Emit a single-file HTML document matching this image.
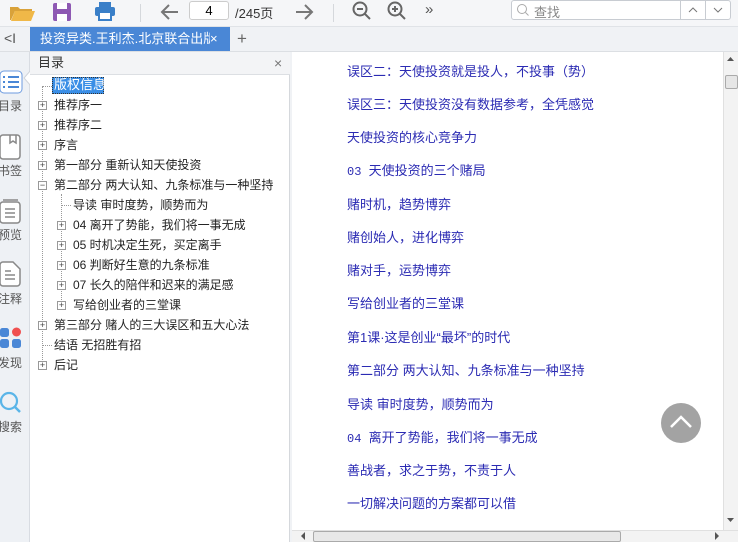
<!DOCTYPE html>
<html><head><meta charset="utf-8"><style>
*{margin:0;padding:0;box-sizing:border-box}
body{width:738px;height:542px;overflow:hidden;background:#f0f2f5;font-family:"Liberation Sans","Noto Sans CJK SC",sans-serif;position:relative}
.abs{position:absolute}
.tb{left:0;top:0;width:738px;height:27px;background:#f5f6f8;border-bottom:1px solid #e0e3e7}
.tabs{left:0;top:27px;width:738px;height:25px;background:#f0f2f5;border-bottom:1px solid #dcdfe3}
.tab{left:30px;top:27px;width:200px;height:24px;background:#4a87d6;color:#fff;font-size:13px;line-height:24px;padding-left:10px;white-space:nowrap;overflow:hidden}
.rail{left:0;top:52px;width:30px;height:490px;background:#eef1f5;border-right:1px solid #d8dce2}
.rl{font-size:12px;color:#555;left:-2px;width:32px;text-align:left;white-space:nowrap}
.toc{left:30px;top:52px;width:260px;height:490px;background:#fff;border-right:1px solid #d5d8dc}
.toch{left:30px;top:52px;width:260px;height:23px;background:#f3f4f6;border-bottom:1px solid #dcdfe3;font-size:13px;line-height:22px;padding-left:8px;color:#333}
.ti{font-size:12px;color:#222;white-space:nowrap;line-height:16px}
.pb{width:9px;height:9px;border:1px solid #999;background:#fff;font-size:9px;line-height:7px;text-align:center;color:#444}
.content{left:292px;top:52px;width:432px;height:478px;background:#fff}
.cl{left:347px;font-size:13px;color:#2b2bb3;white-space:nowrap}
.vs{left:723px;top:52px;width:15px;height:478px;background:#f3f3f3;border-left:1px solid #e0e0e0}
.hs{left:292px;top:530px;width:446px;height:12px;background:#f3f3f3;border-top:1px solid #e0e0e0}
</style></head><body>
<div class="abs tb"></div>
<svg class="abs" style="left:8px;top:2px" width="28" height="20"><path d="M2 5h8l2 2h12v2H7L3 18H2z" fill="#d9a23a"/><path d="M7 9h20l-4 10H3z" fill="#f0b848"/></svg>
<svg class="abs" style="left:52px;top:2px" width="20" height="20"><rect x="1" y="1" width="18" height="18" rx="2" fill="#8e59b3"/><rect x="5" y="1" width="10" height="6" fill="#fff"/><rect x="5" y="12" width="10" height="7" fill="#fff"/></svg>
<svg class="abs" style="left:94px;top:1px" width="22" height="20"><rect x="5" y="1" width="12" height="5" fill="#3a7fc8"/><rect x="1" y="6" width="20" height="9" rx="2" fill="#3a7fc8"/><rect x="5" y="11" width="12" height="8" fill="#fff" stroke="#3a7fc8" stroke-width="2"/></svg>
<div class="abs" style="left:140px;top:4px;width:1px;height:18px;background:#d5d8dc"></div>
<svg class="abs" style="left:160px;top:3px" width="20" height="18"><path d="M18 9H3M9 2L2 9l7 7" stroke="#777" stroke-width="2" fill="none"/></svg>
<div class="abs" style="left:189px;top:1px;width:40px;height:19px;background:#fff;border:1px solid #ccc;border-radius:3px;font-size:13px;text-align:center;line-height:17px">4</div>
<div class="abs" style="left:235px;top:3px;font-size:13px;color:#333">/245页</div>
<svg class="abs" style="left:294px;top:3px" width="20" height="18"><path d="M2 9h15M11 2l7 7-7 7" stroke="#777" stroke-width="2" fill="none"/></svg>
<div class="abs" style="left:333px;top:4px;width:1px;height:18px;background:#d5d8dc"></div>
<svg class="abs" style="left:352px;top:1px" width="20" height="20"><circle cx="8" cy="8" r="6.5" stroke="#666" stroke-width="2" fill="none"/><path d="M13 13l5 5M5 8h6" stroke="#666" stroke-width="2"/></svg>
<svg class="abs" style="left:387px;top:1px" width="20" height="20"><circle cx="8" cy="8" r="6.5" stroke="#666" stroke-width="2" fill="none"/><path d="M13 13l5 5M5 8h6M8 5v6" stroke="#666" stroke-width="2"/></svg>
<div class="abs" style="left:425px;top:1px;font-size:15px;color:#555">»</div>
<div class="abs" style="left:511px;top:0;width:220px;height:20px;background:#fff;border:1px solid #c8ccd2;border-radius:3px"></div>
<svg class="abs" style="left:516px;top:3px" width="14" height="14"><circle cx="6" cy="6" r="4.5" stroke="#aaa" fill="none"/><path d="M9.5 9.5l3 3" stroke="#aaa"/></svg>
<div class="abs" style="left:534px;top:2px;font-size:13px;color:#888">查找</div>
<div class="abs" style="left:680px;top:0;width:1px;height:20px;background:#c8ccd2"></div>
<div class="abs" style="left:705px;top:0;width:1px;height:20px;background:#c8ccd2"></div>
<svg class="abs" style="left:687px;top:6px" width="12" height="8"><path d="M2 6l4-4 4 4" stroke="#777" fill="none"/></svg>
<svg class="abs" style="left:712px;top:6px" width="12" height="8"><path d="M2 2l4 4 4-4" stroke="#777" fill="none"/></svg>

<div class="abs tabs"></div>
<div class="abs" style="left:4px;top:30px;font-size:14px;color:#555">&lt;I</div>
<div class="abs tab">投资异类.王利杰.北京联合出版公</div>
<div class="abs" style="left:210px;top:27px;width:20px;height:24px;background:#4a87d6;color:#fff;font-size:13px;line-height:24px">×</div>
<div class="abs" style="left:237px;top:29px;font-size:17px;color:#666">+</div>

<div class="abs rail"></div>
<svg class="abs" style="left:-1px;top:70px" width="24" height="24"><rect x="1" y="1" width="22" height="22" rx="4" fill="#fff" stroke="#6d9be0"/><path d="M4 7h2M9 7h11M4 12h2M9 12h11M4 17h2M9 17h11" stroke="#4a87d6" stroke-width="2"/></svg>
<div class="abs rl" style="top:97px">目录</div>
<svg class="abs" style="left:-1px;top:134px" width="24" height="26"><rect x="1" y="1" width="20" height="24" rx="3" fill="#fff" stroke="#888" stroke-width="1.5"/><path d="M11 1v8l3-2 3 2V1" fill="none" stroke="#888" stroke-width="1.5"/></svg>
<div class="abs rl" style="top:162px">书签</div>
<svg class="abs" style="left:-1px;top:198px" width="24" height="26"><rect x="1" y="4" width="20" height="21" rx="3" fill="#fff" stroke="#888" stroke-width="1.5"/><path d="M4 2h15M6 11h10M6 15h10M6 19h10" stroke="#888" stroke-width="1.5"/></svg>
<div class="abs rl" style="top:226px">预览</div>
<svg class="abs" style="left:-1px;top:261px" width="24" height="26"><path d="M1 4a3 3 0 0 1 3-3h10l7 7v14a3 3 0 0 1-3 3H4a3 3 0 0 1-3-3z" fill="#fff" stroke="#888" stroke-width="1.5"/><path d="M6 10h6M6 14h10M6 18h10" stroke="#888" stroke-width="1.5"/></svg>
<div class="abs rl" style="top:290px">注释</div>
<svg class="abs" style="left:0;top:326px" width="24" height="26"><rect x="0" y="2" width="9" height="9" rx="2.5" fill="#4a87d6"/><circle cx="16.5" cy="6" r="4.5" fill="#f05050"/><rect x="0" y="13" width="9" height="9" rx="2.5" fill="#4a87d6"/><rect x="12" y="13" width="9" height="9" rx="2.5" fill="#4a87d6"/></svg>
<div class="abs rl" style="top:354px">发现</div>
<svg class="abs" style="left:-1px;top:390px" width="24" height="26"><circle cx="10" cy="11" r="8" stroke="#5ab5e8" stroke-width="2.2" fill="none"/><path d="M16 17l5 5" stroke="#5ab5e8" stroke-width="2.5"/></svg>
<div class="abs rl" style="top:418px">搜索</div>
<svg class="abs" style="left:23px;top:70px" width="8" height="16"><path d="M8 0L1 8l7 8" fill="#fff" stroke="#d0d4da"/></svg>

<div class="abs toc"></div>
<div class="abs toch">目录</div>
<div class="abs" style="left:274px;top:55px;font-size:14px;color:#777">×</div>
<div class="abs" style="left:42px;top:86px;height:280px;border-left:1px dotted #999"></div>
<div class="abs" style="left:42px;top:86px;width:10px;border-top:1px dotted #999"></div>
<div class="abs" style="left:61px;top:194px;height:112px;border-left:1px dotted #999"></div>
<div class="abs" style="left:61px;top:205px;width:10px;border-top:1px dotted #999"></div>
<div class="abs" style="left:42px;top:345px;width:10px;border-top:1px dotted #999"></div>
<div class="abs" style="left:52px;top:77px;width:52px;height:17px;background:#3a8ee6;border:1px dotted #333"></div>
<div class="abs ti" style="left:54px;top:77px;color:#fff;font-size:13px">版权信息</div>
<div class="abs ti" style="left:54px;top:97px">推荐序一</div>
<div class="abs ti" style="left:54px;top:117px">推荐序二</div>
<div class="abs ti" style="left:54px;top:137px">序言</div>
<div class="abs ti" style="left:54px;top:157px">第一部分 重新认知天使投资</div>
<div class="abs ti" style="left:54px;top:177px">第二部分 两大认知、九条标准与一种坚持</div>
<div class="abs ti" style="left:73px;top:197px">导读 审时度势，顺势而为</div>
<div class="abs ti" style="left:73px;top:217px">04 离开了势能，我们将一事无成</div>
<div class="abs ti" style="left:73px;top:237px">05 时机决定生死，买定离手</div>
<div class="abs ti" style="left:73px;top:257px">06 判断好生意的九条标准</div>
<div class="abs ti" style="left:73px;top:277px">07 长久的陪伴和迟来的满足感</div>
<div class="abs ti" style="left:73px;top:297px">写给创业者的三堂课</div>
<div class="abs ti" style="left:54px;top:317px">第三部分 赌人的三大误区和五大心法</div>
<div class="abs ti" style="left:54px;top:337px">结语 无招胜有招</div>
<div class="abs ti" style="left:54px;top:357px">后记</div>
<div class="abs pb" style="left:38px;top:101px">+</div>
<div class="abs pb" style="left:38px;top:121px">+</div>
<div class="abs pb" style="left:38px;top:141px">+</div>
<div class="abs pb" style="left:38px;top:161px">+</div>
<div class="abs pb" style="left:38px;top:181px">−</div>
<div class="abs pb" style="left:57px;top:221px">+</div>
<div class="abs pb" style="left:57px;top:241px">+</div>
<div class="abs pb" style="left:57px;top:261px">+</div>
<div class="abs pb" style="left:57px;top:281px">+</div>
<div class="abs pb" style="left:57px;top:301px">+</div>
<div class="abs pb" style="left:38px;top:321px">+</div>
<div class="abs pb" style="left:38px;top:361px">+</div>

<div class="abs content"></div>
<div class="abs cl" style="top:61px">误区二：天使投资就是投人，不投事（势）</div>
<div class="abs cl" style="top:94px">误区三：天使投资没有数据参考，全凭感觉</div>
<div class="abs cl" style="top:127px">天使投资的核心竞争力</div>
<div class="abs cl" style="top:160px"><span style="font-family:'Liberation Mono',monospace;font-size:12px">03 </span>天使投资的三个赌局</div>
<div class="abs cl" style="top:194px">赌时机，趋势博弈</div>
<div class="abs cl" style="top:227px">赌创始人，进化博弈</div>
<div class="abs cl" style="top:260px">赌对手，运势博弈</div>
<div class="abs cl" style="top:293px">写给创业者的三堂课</div>
<div class="abs cl" style="top:327px">第1课·这是创业“最坏”的时代</div>
<div class="abs cl" style="top:360px">第二部分 两大认知、九条标准与一种坚持</div>
<div class="abs cl" style="top:394px">导读 审时度势，顺势而为</div>
<div class="abs cl" style="top:427px"><span style="font-family:'Liberation Mono',monospace;font-size:12px">04 </span>离开了势能，我们将一事无成</div>
<div class="abs cl" style="top:460px">善战者，求之于势，不责于人</div>
<div class="abs cl" style="top:493px">一切解决问题的方案都可以借</div>
<svg class="abs" style="left:661px;top:403px" width="40" height="40"><circle cx="20" cy="20" r="20" fill="#a3a3a3"/><path d="M10 24l10-10 10 10" stroke="#fff" stroke-width="2.5" fill="none"/></svg>

<div class="abs vs"></div>
<svg class="abs" style="left:727px;top:56px" width="8" height="6"><path d="M0 5h7L3.5 1z" fill="#555"/></svg>
<div class="abs" style="left:725px;top:75px;width:13px;height:14px;background:#e6e6e6;border:1px solid #aaa;border-radius:2px"></div>
<svg class="abs" style="left:727px;top:517px" width="8" height="6"><path d="M0 1h7L3.5 5z" fill="#555"/></svg>
<div class="abs hs"></div>
<svg class="abs" style="left:300px;top:532px" width="6" height="8"><path d="M5 0v8L1 4z" fill="#555"/></svg>
<div class="abs" style="left:313px;top:531px;width:308px;height:11px;background:#e8e8e8;border:1px solid #aaa;border-radius:2px"></div>
<svg class="abs" style="left:714px;top:532px" width="6" height="8"><path d="M1 0v8L5 4z" fill="#555"/></svg>
</body></html>
